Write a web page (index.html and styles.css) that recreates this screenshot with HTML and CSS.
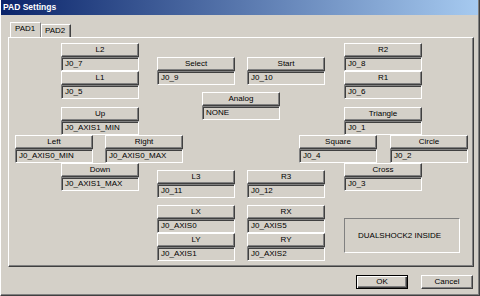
FILE: index.html
```html
<!DOCTYPE html>
<html lang="en">
<head>
    <meta charset="UTF-8">
    <title>PAD Settings</title>
    <link rel="stylesheet" href="styles.css">
</head>
<body>

    <div class="window">
        <div class="titlebar">PAD Settings</div>

        <!-- pad tabs -->
        <div class="tabs">
            <span class="tab active">PAD1</span>
            <span class="tab">PAD2</span>
        </div>

        <!-- button bindings -->
        <div class="panel">
            <div class="ctl c-l2"><button type="button" class="btn">L2</button><div class="field">J0_7</div></div>
            <div class="ctl c-l1"><button type="button" class="btn">L1</button><div class="field">J0_5</div></div>
            <div class="ctl c-select"><button type="button" class="btn">Select</button><div class="field">J0_9</div></div>
            <div class="ctl c-start"><button type="button" class="btn">Start</button><div class="field">J0_10</div></div>
            <div class="ctl c-analog"><button type="button" class="btn">Analog</button><div class="field">NONE</div></div>
            <div class="ctl c-r2"><button type="button" class="btn">R2</button><div class="field">J0_8</div></div>
            <div class="ctl c-r1"><button type="button" class="btn">R1</button><div class="field">J0_6</div></div>

            <div class="ctl c-up"><button type="button" class="btn">Up</button><div class="field">J0_AXIS1_MIN</div></div>
            <div class="ctl c-left"><button type="button" class="btn">Left</button><div class="field">J0_AXIS0_MIN</div></div>
            <div class="ctl c-right"><button type="button" class="btn">Right</button><div class="field">J0_AXIS0_MAX</div></div>
            <div class="ctl c-down"><button type="button" class="btn">Down</button><div class="field">J0_AXIS1_MAX</div></div>

            <div class="ctl c-triangle"><button type="button" class="btn">Triangle</button><div class="field">J0_1</div></div>
            <div class="ctl c-square"><button type="button" class="btn">Square</button><div class="field">J0_4</div></div>
            <div class="ctl c-circle"><button type="button" class="btn">Circle</button><div class="field">J0_2</div></div>
            <div class="ctl c-cross"><button type="button" class="btn">Cross</button><div class="field">J0_3</div></div>

            <div class="ctl c-l3"><button type="button" class="btn">L3</button><div class="field">J0_11</div></div>
            <div class="ctl c-r3"><button type="button" class="btn">R3</button><div class="field">J0_12</div></div>
            <div class="ctl c-lx"><button type="button" class="btn">LX</button><div class="field">J0_AXIS0</div></div>
            <div class="ctl c-rx"><button type="button" class="btn">RX</button><div class="field">J0_AXIS5</div></div>
            <div class="ctl c-ly"><button type="button" class="btn">LY</button><div class="field">J0_AXIS1</div></div>
            <div class="ctl c-ry"><button type="button" class="btn">RY</button><div class="field">J0_AXIS2</div></div>

            <div class="badge">DUALSHOCK2 INSIDE</div>
        </div>

        <div class="actions">
            <button type="button" class="action default">OK</button>
            <button type="button" class="action">Cancel</button>
        </div>
    </div>

</body>
</html>
```

FILE: styles.css
```css
/* classic dialog look */
body {
    margin: 0;
    font-family: "Liberation Sans", Arial, sans-serif;
    font-size: 8px;
    color: #000;
    background-color: #d4d0c8;
}

.window {
    width: 480px;
    height: 296px;
    box-sizing: border-box;
    background-color: #d4d0c8;
    border-left: 1px solid #fff;
    border-right: 1px solid #404040;
    border-bottom: 1px solid #404040;
    box-shadow: inset -1px -1px #808080;
    display: flex;
    flex-direction: column;
}

.titlebar {
    height: 15px;
    margin-right: 1px;
    padding-left: 2px;
    background: linear-gradient(to right, #0a246a, #a6caf0);
    color: #fff;
    font-weight: bold;
    font-size: 8.5px;
    line-height: 15px;
}

.tabs {
    display: flex;
    align-items: flex-end;
    height: 15px;
    margin: 7px 0 0 9px;
}

.tab {
    box-sizing: border-box;
    height: 13px;
    width: 30px;
    padding-left: 3px;
    border-top: 1px solid #fff;
    border-left: 1px solid #fff;
    border-right: 1px solid #404040;
    box-shadow: inset -1px 0 #808080;
    line-height: 12px;
}

.tab.active {
    width: 31px;
    height: 15px;
    line-height: 11px;
    padding-left: 4px;
    border-right-color: #808080;
    box-shadow: none;
}

.panel {
    box-sizing: border-box;
    width: 466px;
    height: 230px;
    margin-left: 7px;
    padding: 5px 0 0 6px;
    border-top: 1px solid #fff;
    border-left: 1px solid #fff;
    border-right: 1px solid #404040;
    border-bottom: 1px solid #404040;
    box-shadow: inset -1px -1px #808080;
    display: grid;
    grid-template-columns: 46px 44px 52px 45px 45px 52px 45px 46px 78px;
    grid-template-rows: 14px 14px 21px 15px 28px 28px 7px 35px 13px 15px 28px;
}

.ctl {
    width: 78px;
    height: 28px;
    display: flex;
    flex-direction: column;
    align-self: start;
    justify-self: start;
}

.btn {
    display: block;
    box-sizing: border-box;
    height: 14px;
    margin: 0;
    padding: 0;
    font: inherit;
    color: #000;
    background-color: #d4d0c8;
    border-top: 1px solid #fff;
    border-left: 1px solid #fff;
    border-right: 1px solid #404040;
    border-bottom: 1px solid #404040;
    box-shadow: inset -1px -1px #808080;
    text-align: center;
    line-height: 12px;
}

.field {
    box-sizing: border-box;
    height: 14px;
    padding-left: 3px;
    border-top: 1px solid #808080;
    border-left: 1px solid #808080;
    border-right: 1px solid #fff;
    border-bottom: 1px solid #fff;
    box-shadow: inset 1px 1px #404040;
    line-height: 12px;
    white-space: nowrap;
}

/* placement of each binding on the pad layout */
.c-l2 { grid-area: 1 / 2; }
.c-l1 { grid-area: 3 / 2; }
.c-select { grid-area: 2 / 4; }
.c-start { grid-area: 2 / 6; }
.c-analog { grid-area: 4 / 5; }
.c-r2 { grid-area: 1 / 8; }
.c-r1 { grid-area: 3 / 8; }
.c-up { grid-area: 5 / 2; }
.c-left { grid-area: 6 / 1; }
.c-right { grid-area: 6 / 3; }
.c-down { grid-area: 7 / 2; }
.c-triangle { grid-area: 5 / 8; }
.c-square { grid-area: 6 / 7; }
.c-circle { grid-area: 6 / 9; }
.c-cross { grid-area: 7 / 8; }
.c-l3 { grid-area: 8 / 4; }
.c-r3 { grid-area: 8 / 6; }
.c-lx { grid-area: 9 / 4; }
.c-rx { grid-area: 9 / 6; }
.c-ly { grid-area: 11 / 4; }
.c-ry { grid-area: 11 / 6; }

.badge {
    grid-area: 10 / 8 / auto / span 2;
    align-self: start;
    justify-self: start;
    box-sizing: border-box;
    width: 116px;
    height: 35px;
    padding-left: 13px;
    border-top: 1px solid #808080;
    border-left: 1px solid #808080;
    border-right: 1px solid #fff;
    border-bottom: 1px solid #fff;
    display: flex;
    align-items: center;
}

.actions {
    display: flex;
    justify-content: flex-end;
    gap: 13px;
    margin-top: 8px;
    padding-right: 6px;
}

.action {
    box-sizing: border-box;
    width: 52px;
    height: 14px;
    margin: 0;
    padding: 0;
    font: inherit;
    color: #000;
    background-color: #d4d0c8;
    border-top: 1px solid #fff;
    border-left: 1px solid #fff;
    border-right: 1px solid #404040;
    border-bottom: 1px solid #404040;
    box-shadow: inset -1px -1px #808080;
    line-height: 12px;
}

.action.default {
    border: 1px solid #000;
    box-shadow: inset 1px 1px #fff, inset -1px -1px #404040, inset -2px -2px #808080;
}
```
